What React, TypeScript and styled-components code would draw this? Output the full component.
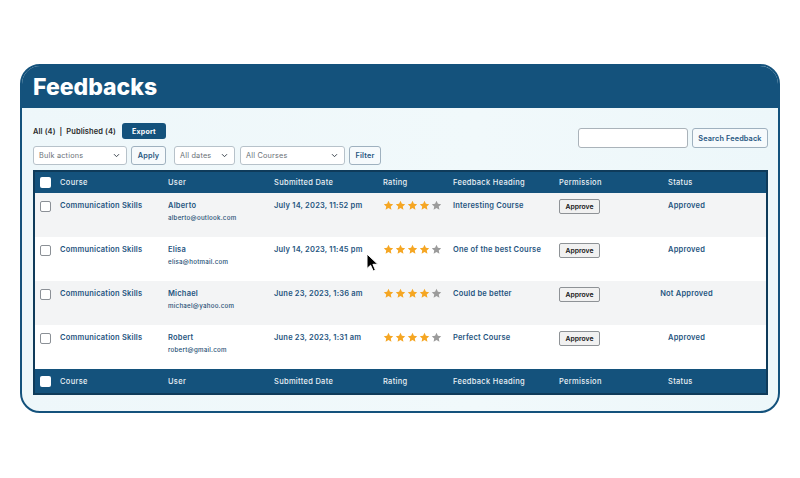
import React from "react";
import styled, { createGlobalStyle } from "styled-components";

const Global = createGlobalStyle`
  html, body { margin: 0; padding: 0; background: #ffffff; }
  body { font-family: Inter, "Open Sans", Arial, sans-serif; -webkit-font-smoothing: antialiased; }
  * { box-sizing: border-box; }
`;

const navy = "#14527c";
const textBlue = "#1f5580";

const Page = styled.div`
  width: 800px;
  height: 478px;
  padding: 64px 20px 0 20px;
  position: relative;
`;

const Card = styled.div`
  width: 760px;
  height: 349px;
  border: 2px solid ${navy};
  border-radius: 20px;
  overflow: hidden;
  display: flex;
  flex-direction: column;
  background: linear-gradient(90deg, #eef7fa 0%, #f1f9fb 60%, #edf7fa 100%);
`;

const Header = styled.div`
  height: 42px;
  background: ${navy};
  display: flex;
  align-items: center;
  padding-left: 11px;
`;

const Title = styled.h1`
  margin: 0;
  color: #ffffff;
  font-size: 23px;
  font-weight: 800;
  letter-spacing: 0;
`;

const Body = styled.div`
  flex: 1;
  padding: 15px 10px 0 11px;
  display: flex;
  flex-direction: column;
`;

const Toolbar = styled.div`
  display: flex;
  justify-content: space-between;
  align-items: flex-start;
`;

const LeftTools = styled.div`
  display: flex;
  flex-direction: column;
  gap: 7px;
`;

const StatusRow = styled.div`
  display: flex;
  align-items: center;
  height: 16px;
  gap: 6px;
`;

const StatusLinks = styled.span`
  font-size: 7.5px;
  font-weight: 600;
  letter-spacing: 0.1px;
  color: #2a2a2a;
`;

const ExportButton = styled.button`
  width: 44px;
  height: 16px;
  border: none;
  border-radius: 3px;
  background: ${navy};
  color: #ffffff;
  font-family: inherit;
  font-size: 7px;
  font-weight: 700;
  letter-spacing: 0.2px;
  padding: 0;
`;

const FilterRow = styled.div`
  display: flex;
  align-items: center;
  height: 19px;
`;

const Select = styled.div<{ $w: number; $ml?: number }>`
  width: ${(p) => p.$w}px;
  margin-left: ${(p) => p.$ml ?? 0}px;
  height: 19px;
  border: 1px solid #b7c2ca;
  border-radius: 3px;
  background: #ffffff;
  display: flex;
  align-items: center;
  justify-content: space-between;
  padding: 0 6px 0 5px;
  font-size: 7.3px;
  letter-spacing: 0.2px;
  color: #6b7177;
`;

const Chevron = () => (
  <svg width="7" height="5" viewBox="0 0 7 5">
    <path d="M1 1.2 L3.5 3.7 L6 1.2" fill="none" stroke="#3d4650" strokeWidth="1" />
  </svg>
);

const GhostButton = styled.button<{ $w: number; $ml?: number }>`
  width: ${(p) => p.$w}px;
  margin-left: ${(p) => p.$ml ?? 0}px;
  height: 19px;
  border: 1px solid #9fb1bf;
  border-radius: 3px;
  background: #f6fafc;
  color: ${textBlue};
  font-family: inherit;
  font-size: 7.3px;
  font-weight: 600;
  letter-spacing: 0.2px;
  padding: 0;
`;

const SearchBox = styled.div`
  display: flex;
  gap: 4px;
  margin-top: 5px;
`;

const SearchInput = styled.div`
  width: 110px;
  height: 20px;
  border: 1px solid #aab3ba;
  border-radius: 3px;
  background: #ffffff;
`;

const SearchButton = styled.button`
  width: 76px;
  height: 20px;
  border: 1px solid #9fb1bf;
  border-radius: 3px;
  background: #f6fafc;
  color: ${textBlue};
  font-family: inherit;
  font-size: 7.3px;
  font-weight: 600;
  letter-spacing: 0.15px;
  padding: 0;
`;

const Table = styled.div`
  margin-top: 5px;
  width: 735px;
  border: 2px solid #0f3b5a;
  display: flex;
  flex-direction: column;
`;

const cols = "20px 108px 106px 109px 70px 106px 109px 1fr";

const HeadRow = styled.div<{ $h: number }>`
  display: grid;
  grid-template-columns: ${cols};
  align-items: center;
  height: ${(p) => p.$h}px;
  padding-left: 5px;
  background: ${navy};
  color: #e9f0f5;
  font-size: 7.5px;
  font-weight: 500;
  letter-spacing: 0.3px;
`;

const HeadCheck = styled.span`
  width: 11px;
  height: 11px;
  border-radius: 2px;
  background: #ffffff;
`;

const Row = styled.div<{ $alt: boolean }>`
  display: grid;
  grid-template-columns: ${cols};
  align-items: start;
  height: 44px;
  padding: 7px 0 0 5px;
  background: ${(p) => (p.$alt ? "#f3f4f5" : "#ffffff")};
  color: ${textBlue};
  font-size: 7.5px;
  font-weight: 600;
  letter-spacing: 0.2px;
`;

const RowCheck = styled.span`
  width: 11px;
  height: 11px;
  margin-top: 1px;
  border: 1px solid #8b9096;
  border-radius: 2px;
  background: #ffffff;
`;

const Cell = styled.div`
  display: flex;
  flex-direction: column;
  gap: 2px;
  line-height: 11px;
  white-space: nowrap;
`;

const Email = styled.span`
  font-size: 6.2px;
  font-weight: 500;
  letter-spacing: 0.25px;
  line-height: 9px;
  color: #1d4e73;
`;

const Stars = styled.div`
  display: flex;
  gap: 1px;
  margin-top: 0;
`;

const ApproveButton = styled.button`
  width: 41px;
  height: 15px;
  margin-top: -1px;
  border: 1px solid #8e9296;
  border-radius: 2px;
  background: #f1f1f1;
  color: #111111;
  font-family: inherit;
  font-size: 6.8px;
  font-weight: 600;
  padding: 0;
`;

const StatusCell = styled.div`
  width: 37px;
  display: flex;
  justify-content: center;
  white-space: nowrap;
  line-height: 11px;
`;

const Cursor = styled.svg`
  position: absolute;
  left: 366px;
  top: 253px;
`;

const Star = ({ on }: { on: boolean }) => (
  <svg width="11" height="11" viewBox="0 0 24 24">
    <path
      d="M12 1.8l3.1 6.6 7.2.8-5.4 4.9 1.5 7.1L12 17.6l-6.4 3.6 1.5-7.1L1.7 9.2l7.2-.8z"
      fill={on ? "#f5a623" : "#9b9b9b"}
    />
  </svg>
);

const rows = [
  { user: "Alberto", email: "alberto@outlook.com", date: "July 14, 2023, 11:52 pm", heading: "Interesting Course", status: "Approved" },
  { user: "Elisa", email: "elisa@hotmail.com", date: "July 14, 2023, 11:45 pm", heading: "One of the best Course", status: "Approved" },
  { user: "Michael", email: "michael@yahoo.com", date: "June 23, 2023, 1:36 am", heading: "Could be better", status: "Not Approved" },
  { user: "Robert", email: "robert@gmail.com", date: "June 23, 2023, 1:31 am", heading: "Perfect Course", status: "Approved" },
];

const headers = ["Course", "User", "Submitted Date", "Rating", "Feedback Heading", "Permission", "Status"];

const HeaderCells = () => (
  <>
    <HeadCheck />
    {headers.map((h) => (
      <span key={h}>{h}</span>
    ))}
  </>
);

export default function App() {
  return (
    <Page>
      <Global />
      <Card>
        <Header>
          <Title>Feedbacks</Title>
        </Header>
        <Body>
          <Toolbar>
            <LeftTools>
              <StatusRow>
                <StatusLinks>All (4) &nbsp;|&nbsp; Published (4)</StatusLinks>
                <ExportButton>Export</ExportButton>
              </StatusRow>
              <FilterRow>
                <Select $w={94}>
                  <span>Bulk actions</span>
                  <Chevron />
                </Select>
                <GhostButton $w={35} $ml={4}>Apply</GhostButton>
                <Select $w={61} $ml={8}>
                  <span>All dates</span>
                  <Chevron />
                </Select>
                <Select $w={105} $ml={5}>
                  <span>All Courses</span>
                  <Chevron />
                </Select>
                <GhostButton $w={32} $ml={4}>Filter</GhostButton>
              </FilterRow>
            </LeftTools>
            <SearchBox>
              <SearchInput />
              <SearchButton>Search Feedback</SearchButton>
            </SearchBox>
          </Toolbar>
          <Table>
            <HeadRow $h={21}>
              <HeaderCells />
            </HeadRow>
            {rows.map((r, i) => (
              <Row key={r.user} $alt={i % 2 === 0}>
                <RowCheck />
                <Cell>Communication Skills</Cell>
                <Cell>
                  <span>{r.user}</span>
                  <Email>{r.email}</Email>
                </Cell>
                <Cell>{r.date}</Cell>
                <Stars>
                  {[0, 1, 2, 3, 4].map((s) => (
                    <Star key={s} on={s < 4} />
                  ))}
                </Stars>
                <Cell>{r.heading}</Cell>
                <div>
                  <ApproveButton>Approve</ApproveButton>
                </div>
                <StatusCell>{r.status}</StatusCell>
              </Row>
            ))}
            <HeadRow $h={24}>
              <HeaderCells />
            </HeadRow>
          </Table>
        </Body>
      </Card>
      <Cursor width="13" height="19" viewBox="0 0 13 19">
        <path d="M1 1 L1 15.5 L4.6 12.2 L7.2 18 L9.4 17 L6.9 11.3 L11.8 11.3 Z" fill="#000" stroke="#fff" strokeWidth="1" strokeLinejoin="round" />
      </Cursor>
    </Page>
  );
}
